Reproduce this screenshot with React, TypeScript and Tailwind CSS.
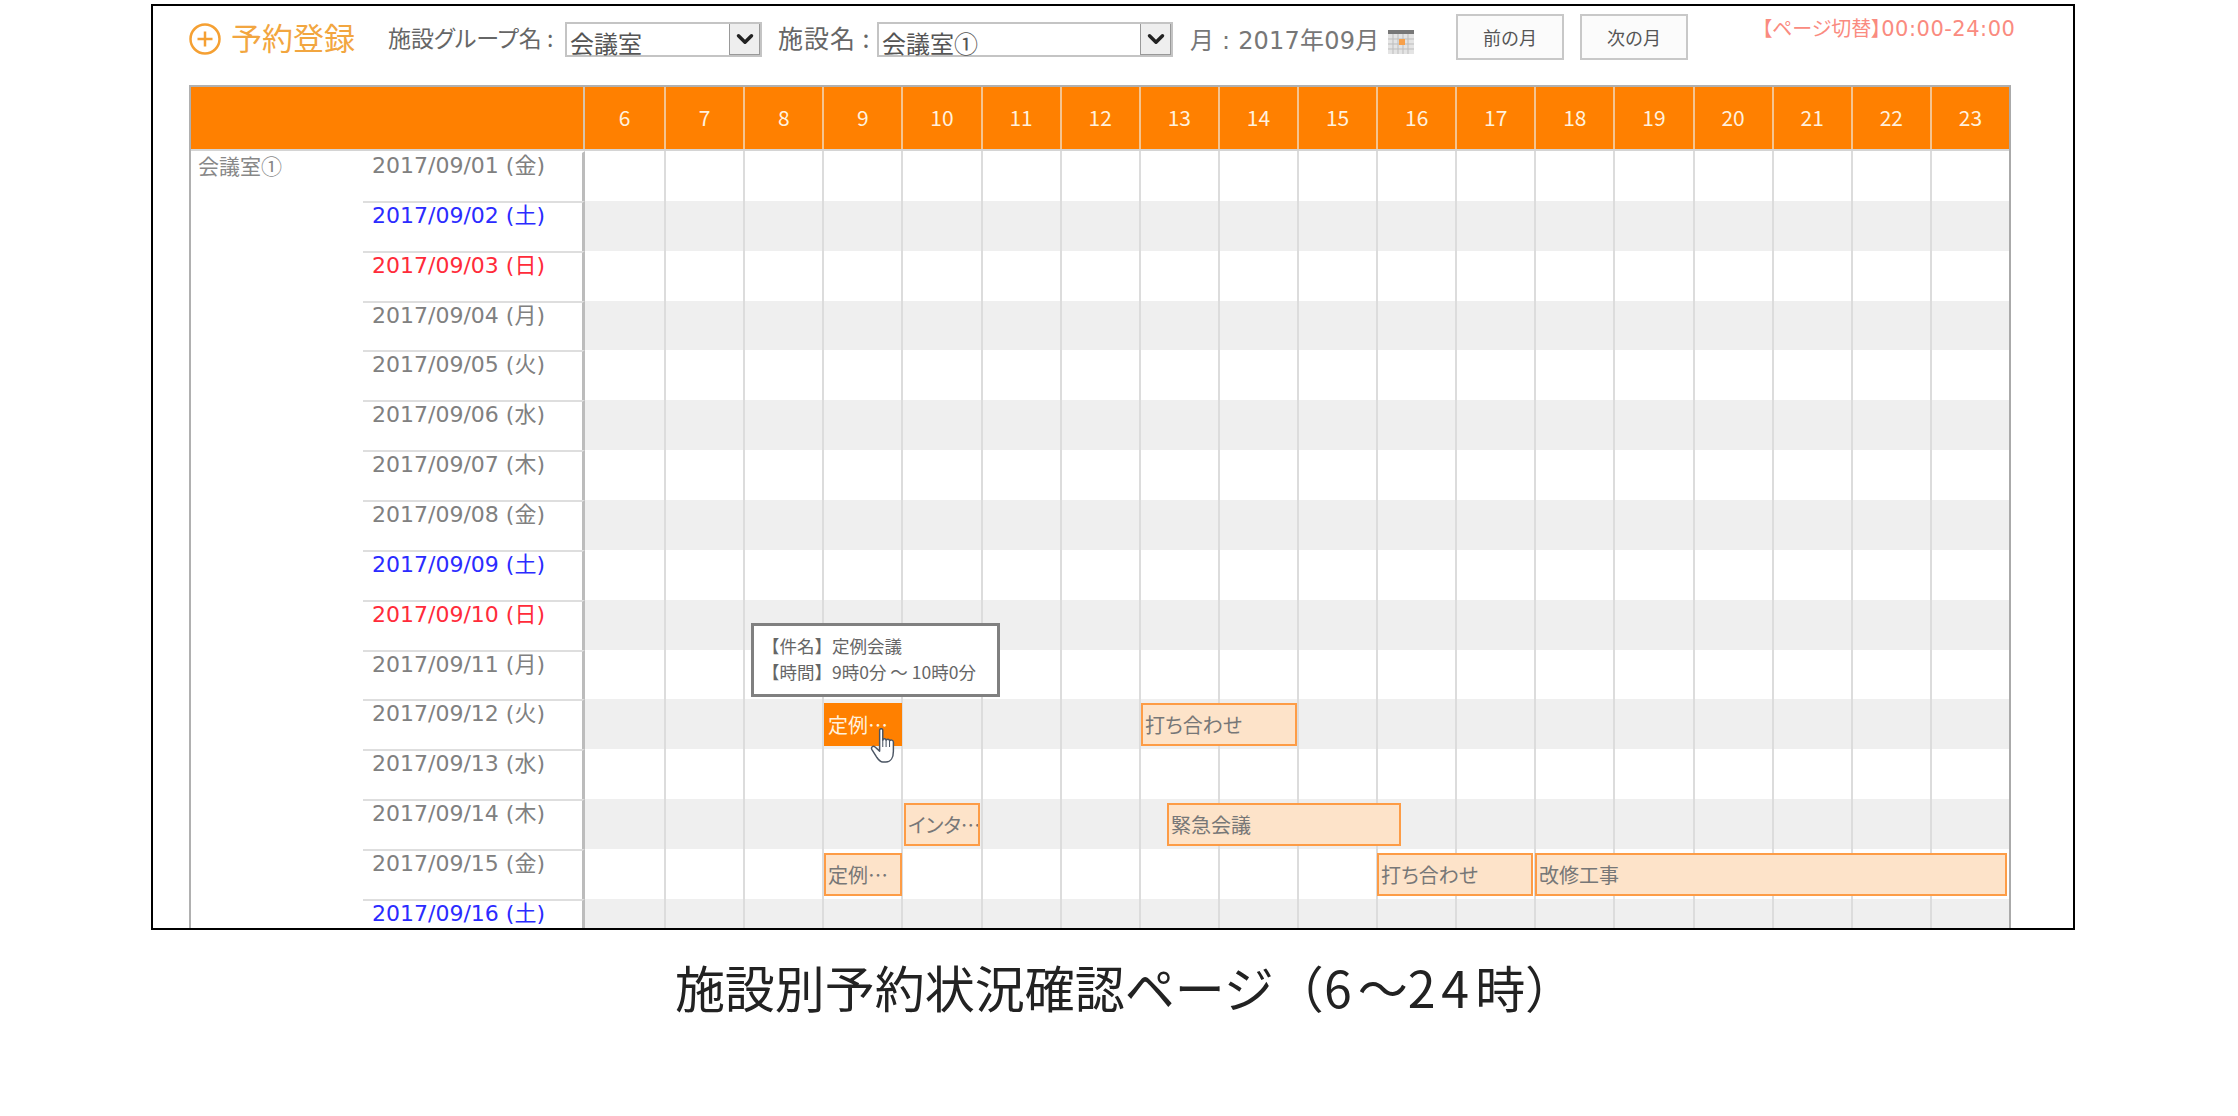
import React from 'react';
import { ChevronDown } from 'lucide-react';

const hours = Array.from({ length: 18 }, (_, i) => i + 6);

type Day = { date: string; color: string };

const days: Day[] = [
  { date: '2017/09/01 (金)', color: 'text-[#808080]' },
  { date: '2017/09/02 (土)', color: 'text-[#2b2bff]' },
  { date: '2017/09/03 (日)', color: 'text-[#ff2b3a]' },
  { date: '2017/09/04 (月)', color: 'text-[#808080]' },
  { date: '2017/09/05 (火)', color: 'text-[#808080]' },
  { date: '2017/09/06 (水)', color: 'text-[#808080]' },
  { date: '2017/09/07 (木)', color: 'text-[#808080]' },
  { date: '2017/09/08 (金)', color: 'text-[#808080]' },
  { date: '2017/09/09 (土)', color: 'text-[#2b2bff]' },
  { date: '2017/09/10 (日)', color: 'text-[#ff2b3a]' },
  { date: '2017/09/11 (月)', color: 'text-[#808080]' },
  { date: '2017/09/12 (火)', color: 'text-[#808080]' },
  { date: '2017/09/13 (水)', color: 'text-[#808080]' },
  { date: '2017/09/14 (木)', color: 'text-[#808080]' },
  { date: '2017/09/15 (金)', color: 'text-[#808080]' },
  { date: '2017/09/16 (土)', color: 'text-[#2b2bff]' },
];

type Booking = { label: string; pos: string; active?: boolean };

// left is measured from the start of the date column
const bookings: Record<number, Booking[]> = {
  11: [
    { label: '定例…', pos: 'left-[461px] w-[78px]', active: true },
    { label: '打ち合わせ', pos: 'left-[778px] w-[156px]' },
  ],
  13: [
    { label: 'インタ…', pos: 'left-[541px] w-[76px]' },
    { label: '緊急会議', pos: 'left-[804px] w-[234px]' },
  ],
  14: [
    { label: '定例…', pos: 'left-[461px] w-[78px]' },
    { label: '打ち合わせ', pos: 'left-[1014px] w-[156px]' },
    { label: '改修工事', pos: 'left-[1172px] w-[472px]' },
  ],
};

const FakeSelect = ({ value, width }: { value: string; width: string }) => (
  <div className={`flex h-[35px] border-2 border-[#c4c4c4] bg-white mt-[16px] ${width}`}>
    <div className="flex-1 pl-[3px] pt-[3px] text-[24px] leading-[32px] text-[#555]">{value}</div>
    <div className="w-[31px] h-full bg-[#eee] border-l border-[#999] border-r border-b flex items-center justify-center">
      <ChevronDown size={26} strokeWidth={3.2} className="text-[#222]" />
    </div>
  </div>
);

const CalendarIcon = () => (
  <svg width="26" height="24" viewBox="0 0 26 24" className="mt-[24px] ml-[8px]">
    <rect x="0" y="0" width="26" height="24" fill="#e4e4e4" />
    <rect x="0" y="0" width="26" height="4" fill="#777" />
    <path d="M0 9h26M0 14h26M0 19h26M5 4v20M10 4v20M15 4v20M20 4v20" stroke="#bdbdbd" strokeWidth="1" />
    <rect x="11" y="9" width="6" height="6" fill="#f7a04a" />
  </svg>
);

const HandCursor = () => (
  <svg width="27" height="35" viewBox="1.5 0.8 22.5 33.6" className="absolute left-[678px] top-[641px]">
    <path
      d="M10 2.8C10 1 13 1 13 2.8V12.5C13.5 10.7 16 10.7 16.2 12.6C17 11 19.4 11.2 19.5 13C20.5 11.8 23.2 12.2 23.2 14.2V23C23.2 28.5 21 33.5 16 33.5H13C10.2 33.5 9 31.5 7 28.5L2.6 21.5C1.4 19.2 3.6 17.4 5.6 19L10 23Z"
      fill="white"
      stroke="#4b5563"
      strokeWidth="1.4"
      strokeLinejoin="round"
    />
    <path d="M13 12.5V19M16.2 12.6V19M19.5 13V19" stroke="#4b5563" strokeWidth="1" fill="none" />
  </svg>
);

const App: React.FC = () => {
  return (
    <div className="w-[2238px] h-[1116px] bg-white overflow-hidden font-['Noto_Sans_CJK_JP','Noto_Sans',sans-serif]">
      <div className="ml-[151px] mt-[4px] w-[1924px] h-[926px] border-2 border-black overflow-hidden">
        {/* toolbar */}
        <div className="flex items-start h-[79px] pl-[36px] whitespace-nowrap">
          <svg width="32" height="32" viewBox="0 0 32 32" className="mt-[17px] text-[#f5a033]">
            <circle cx="16" cy="16" r="14.5" fill="none" stroke="currentColor" strokeWidth="2.5" />
            <path d="M16 8.5v15M8.5 16h15" stroke="currentColor" strokeWidth="2.5" />
          </svg>
          <span className="ml-[10px] w-[157px] mt-[8px] text-[31px] leading-[46px] text-[#f2a640]">予約登録</span>
          <span className="w-[177px] mt-[14px] text-[23px] leading-[34px] text-[#666] [font-feature-settings:'palt']">施設グループ名 :</span>
          <FakeSelect value="会議室" width="w-[197px]" />
          <span className="ml-[16px] w-[99px] mt-[14px] text-[25px] leading-[34px] text-[#666] tracking-[1px]">施設名 :</span>
          <FakeSelect value="会議室①" width="w-[296px]" />
          <span className="ml-[17px] w-[190px] mt-[17px] font-['DejaVu_Sans','Noto_Sans_CJK_JP',sans-serif] text-[24px] leading-[36px] tracking-[0.2px] text-[#777]">月 : 2017年09月</span>
          <CalendarIcon />
          <button className="ml-[42px] w-[108px] h-[46px] mt-[8px] border-2 border-[#c8c8c8] bg-[#fbfbfb] text-[18px] text-[#555]">前の月</button>
          <button className="ml-[16px] w-[108px] h-[46px] mt-[8px] border-2 border-[#c8c8c8] bg-[#fbfbfb] text-[18px] text-[#555]">次の月</button>
          <span className="ml-[74px] mt-[6px] leading-[32px] text-[#fa8b80]">
            <span className="text-[20px] [font-feature-settings:'palt']">【ページ切替】</span>
            <span className="font-['DejaVu_Sans',sans-serif] text-[21px] tracking-[0.5px]">00:00-24:00</span>
          </span>
        </div>

        {/* table */}
        <div className="relative ml-[36px] w-[1822px] border-t-2 border-l-2 border-r-2 border-[#b0b0b0] border-r-[#aaa]">
          <div className="flex h-[62px] bg-[#ff8000]">
            <div className="w-[394px] border-r-2 border-[#d8c4aa]" />
            <div className="flex-1 grid grid-cols-[repeat(18,1fr)]">
              {hours.map((h) => (
                <div key={h} className="flex items-center justify-center border-l-2 border-[#f5c48f] first:border-l-0 text-[21px] text-[#fff1de]">
                  {h}
                </div>
              ))}
            </div>
          </div>

          <div className="flex border-t-2 border-[#d4d4d4]">
            <div className="w-[172px] pl-[7px] text-[21px] leading-[28px] text-[#888]">会議室①</div>
            <div className="flex-1">
              {days.map((day, i) => (
                <div key={day.date} className="relative flex h-[49.87px]">
                  <div className={`w-[222px] pl-[9px] font-['DejaVu_Sans','Noto_Sans_CJK_JP',sans-serif] text-[22px] leading-[26px] border-r-[3px] border-r-[#bcbcbc] border-t-2 ${day.color} ${i > 0 ? 'border-t-[#dedede]' : 'border-t-transparent'}`}>
                    {day.date}
                  </div>
                  <div className={`flex-1 grid grid-cols-[repeat(18,1fr)] ${i % 2 === 1 ? 'bg-[#efefef]' : 'bg-white'}`}>
                    {hours.map((h) => (
                      <div key={h} className="border-l-2 border-[#dcdcdc] first:border-l-0" />
                    ))}
                  </div>
                  {(bookings[i] ?? []).map((b) => (
                    <div
                      key={b.pos}
                      className={`absolute top-[4px] h-[43px] ${b.pos} border-2 pl-[2px] text-[20px] leading-[39px] whitespace-nowrap overflow-hidden [font-feature-settings:'palt'] ${
                        b.active
                          ? 'bg-[#ff8000] border-[#ff8000] text-[#fff1de]'
                          : 'bg-[#fde3c9] border-[#fd9c46] text-[#777]'
                      }`}
                    >
                      {b.label}
                    </div>
                  ))}
                </div>
              ))}
            </div>
          </div>

          {/* hover popup + cursor */}
          <div className="absolute left-[560px] top-[536px] w-[249px] h-[74px] border-[3px] border-[#808080] bg-white pl-[8px] pt-[7px] text-[17.5px] leading-[26px] text-[#666] whitespace-nowrap">
            <div>【件名】定例会議</div>
            <div>【時間】9時0分 ～ 10時0分</div>
          </div>
          <HandCursor />
        </div>
      </div>

      <div className="mt-[26px] pl-[12px] text-center text-[50px] leading-[60px] text-[#222]">
        施設別予約状況確認ページ（<span className="tracking-[6px]">6</span>～<span className="tracking-[6px]">24</span>時）
      </div>
    </div>
  );
};

export default App;
